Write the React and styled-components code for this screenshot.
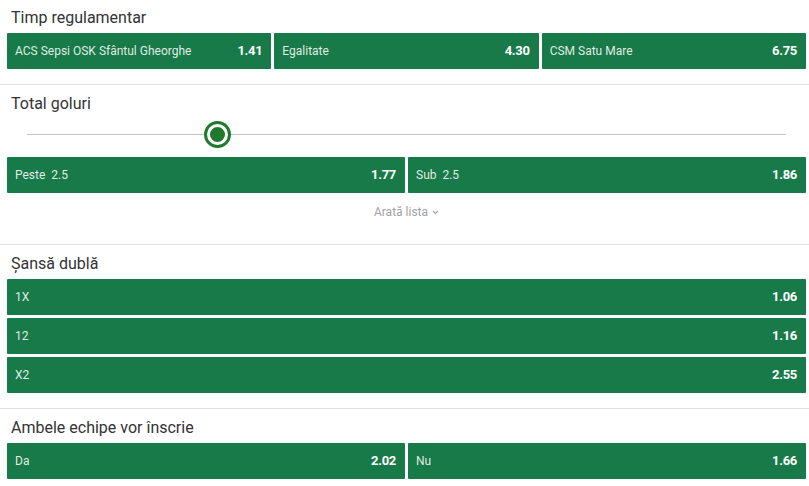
import React from 'react'
import styled, { createGlobalStyle } from 'styled-components'

const GlobalStyle = createGlobalStyle`
  html, body {
    margin: 0;
    padding: 0;
    background: #fff;
    font-family: Roboto, "Liberation Sans", Arial, sans-serif;
  }
`

const Page = styled.div`
  width: 809px;
`

const Section = styled.section`
  padding: 9px 3px 15px 7px;
  border-bottom: 1px solid #e2e2e2;
  &:first-child {
    padding-top: 8px;
  }
  &:last-child {
    border-bottom: none;
  }
`

const Title = styled.h2`
  margin: 0 0 5px 4px;
  font-size: 16px;
  line-height: 20px;
  font-weight: 400;
  color: #333;
`

const Grid = styled.div`
  display: grid;
  grid-template-columns: repeat(${p => p.cols}, 1fr);
  gap: 3px;
`

const Odd = styled.button`
  display: flex;
  align-items: center;
  justify-content: space-between;
  height: 36px;
  padding: 0 9px 1px 8px;
  border: none;
  border-radius: 1px;
  background: #187a48;
  color: #fff;
  font-family: inherit;
  cursor: pointer;
`

const Label = styled.span`
  font-size: 12px;
  letter-spacing: 0;
  color: rgba(255, 255, 255, 0.88);
  word-spacing: ${p => (p.wide ? '3px' : 'normal')};
`

const Price = styled.span`
  font-size: 13px;
  font-weight: 700;
  letter-spacing: -0.3px;
`

const SliderWrap = styled.div`
  position: relative;
  height: 30px;
  margin: 0 20px 8px 20px;
  display: flex;
  align-items: center;
`

const Track = styled.div`
  width: 100%;
  height: 1px;
  background: #c4c4c4;
`

const Thumb = styled.div`
  position: absolute;
  top: 50%;
  width: 15px;
  height: 15px;
  margin: -10.5px 0 0 -10.5px;
  border-radius: 50%;
  background: #1f7a2e;
  border: 3px solid #fff;
  box-shadow: 0 0 0 3px #1f7a2e;
`

const More = styled.div`
  display: flex;
  justify-content: center;
  align-items: center;
  gap: 4px;
  padding: 12px 0 10px;
  font-size: 12px;
  line-height: 14px;
  color: #a3a3a3;
`

const odds = (list, cols, wide) => (
  <Grid cols={cols}>
    {list.map(([l, p]) => (
      <Odd key={l}>
        <Label wide={wide}>{l}</Label>
        <Price>{p}</Price>
      </Odd>
    ))}
  </Grid>
)

export default function App() {
  return (
    <Page>
      <GlobalStyle />
      <Section>
        <Title>Timp regulamentar</Title>
        {odds([
          ['ACS Sepsi OSK Sfântul Gheorghe', '1.41'],
          ['Egalitate', '4.30'],
          ['CSM Satu Mare', '6.75'],
        ], 3)}
      </Section>
      <Section>
        <Title>Total goluri</Title>
        <SliderWrap>
          <Track />
          <Thumb style={{ left: `${((217 - 27) / (786 - 27)) * 100}%` }} />
        </SliderWrap>
        {odds([
          ['Peste 2.5', '1.77'],
          ['Sub 2.5', '1.86'],
        ], 2, true)}
        <More>
          Arată lista
          <svg width="7" height="5" viewBox="0 0 7 5">
            <path d="M1 1l2.5 2.5L6 1" fill="none" stroke="#a3a3a3" strokeWidth="1.2" />
          </svg>
        </More>
      </Section>
      <Section>
        <Title>Șansă dublă</Title>
        {odds([
          ['1X', '1.06'],
          ['12', '1.16'],
          ['X2', '2.55'],
        ], 1)}
      </Section>
      <Section>
        <Title>Ambele echipe vor înscrie</Title>
        {odds([
          ['Da', '2.02'],
          ['Nu', '1.66'],
        ], 2)}
      </Section>
    </Page>
  )
}
